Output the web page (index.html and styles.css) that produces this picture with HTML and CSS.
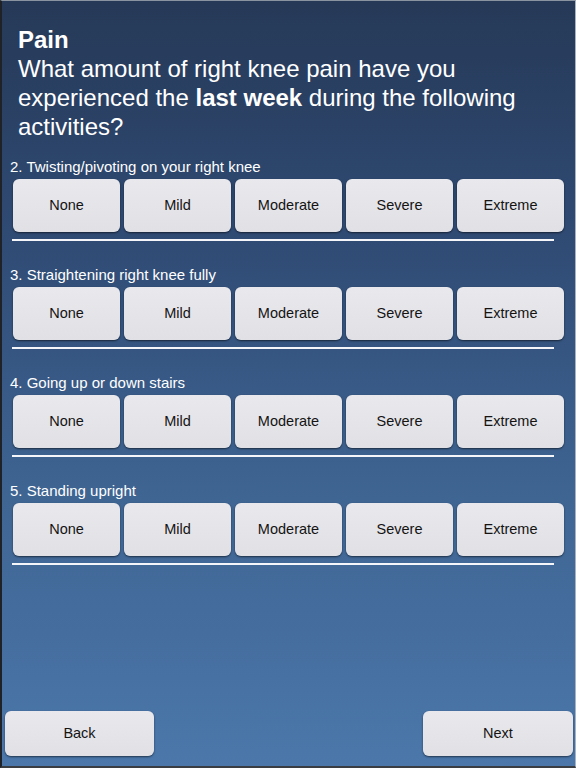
FILE: index.html
```html
<!DOCTYPE html>
<html>
<head>
<meta charset="utf-8">
<link rel="stylesheet" href="styles.css">
</head>
<body>
<div class="screen">
  <div class="header">
    <div class="title">Pain</div>
    <div class="prompt">What amount of right knee pain have you experienced the <b>last week</b> during the following activities?</div>
  </div>
  <div class="questions">
    <div class="question">
      <div class="qlabel">2. Twisting/pivoting on your right knee</div>
      <div class="options">
        <div class="opt">None</div><div class="opt">Mild</div><div class="opt">Moderate</div><div class="opt">Severe</div><div class="opt">Extreme</div>
      </div>
      <div class="rule"></div>
    </div>
    <div class="question">
      <div class="qlabel">3. Straightening right knee fully</div>
      <div class="options">
        <div class="opt">None</div><div class="opt">Mild</div><div class="opt">Moderate</div><div class="opt">Severe</div><div class="opt">Extreme</div>
      </div>
      <div class="rule"></div>
    </div>
    <div class="question">
      <div class="qlabel">4. Going up or down stairs</div>
      <div class="options">
        <div class="opt">None</div><div class="opt">Mild</div><div class="opt">Moderate</div><div class="opt">Severe</div><div class="opt">Extreme</div>
      </div>
      <div class="rule"></div>
    </div>
    <div class="question">
      <div class="qlabel">5. Standing upright</div>
      <div class="options">
        <div class="opt">None</div><div class="opt">Mild</div><div class="opt">Moderate</div><div class="opt">Severe</div><div class="opt">Extreme</div>
      </div>
      <div class="rule"></div>
    </div>
  </div>
  <div class="footer">
    <div class="navbtn back">Back</div>
    <div class="navbtn next">Next</div>
  </div>
</div>
</body>
</html>
```
FILE: styles.css
```css
html, body {
  margin: 0;
  padding: 0;
}
body {
  font-family: "Liberation Sans", Arial, sans-serif;
}
.screen {
  box-sizing: border-box;
  width: 576px;
  height: 768px;
  display: flex;
  flex-direction: column;
  border-left: 2px solid #1f2227;
  border-top: 1px solid #8a93a0;
  border-right: 1px solid #a9b3c0;
  border-bottom: 2px solid #3a3d42;
  background: linear-gradient(to bottom, #263957 0%, #2f4a73 30%, #3f6593 65%, #4b77aa 100%);
  color: #fff;
}
.header {
  padding: 24px 0 0 16px;
  font-size: 24px;
  line-height: 29px;
}
.title {
  font-weight: bold;
}
.prompt {
  width: 540px;
}
.questions {
  padding-top: 17px;
}
.question {
  padding-bottom: 25px;
}
.qlabel {
  font-size: 15px;
  line-height: 17px;
  padding-left: 8px;
  margin-bottom: 4px;
}
.options {
  display: flex;
  gap: 4px;
  padding-left: 11px;
}
.opt, .navbtn {
  box-sizing: border-box;
  background: linear-gradient(to bottom, #e9e8ec, #e1e0e4);
  color: #141414;
  border-radius: 6px;
  box-shadow: 0 1px 2px rgba(0, 0, 0, 0.55);
  display: flex;
  align-items: center;
  justify-content: center;
  font-size: 14.5px;
  padding-bottom: 1px;
}
.opt {
  width: 107px;
  height: 53px;
}
.rule {
  margin: 7px 0 0 10px;
  width: 542px;
  height: 2px;
  background: #f4f6fa;
}
.footer {
  margin-top: auto;
  display: flex;
  justify-content: space-between;
  padding: 0 2px 10px 3px;
}
.navbtn {
  height: 45px;
}
.back {
  width: 149px;
}
.next {
  width: 150px;
}
```
